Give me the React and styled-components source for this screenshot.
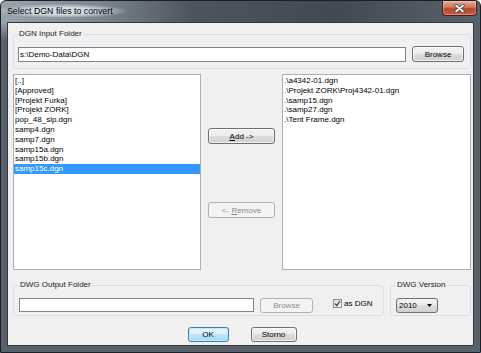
import React from "react";
import styled, { createGlobalStyle, css } from "styled-components";

const GlobalStyle = createGlobalStyle`
  html, body {
    margin: 0;
    padding: 0;
    background: #ffffff;
  }
  body {
    font-family: "Liberation Sans", Arial, sans-serif;
  }
  * {
    box-sizing: border-box;
  }
`;

const Window = styled.div`
  width: 481px;
  height: 353px;
  display: flex;
  flex-direction: column;
  padding: 0 6px 6px;
  border: 1px solid #1c2026;
  border-radius: 6px 6px 0 0;
  overflow: hidden;
  background:
    linear-gradient(to bottom, rgba(88, 97, 107, 0) 0, rgba(88, 97, 107, 0) 21px, #58616b 40px),
    linear-gradient(to right, #9aa4ae 0%, #7c8691 20%, #4c555f 40%, #414952 70%, #59626c 100%);
`;

const TitleBar = styled.div`
  flex: none;
  height: 21px;
  display: flex;
  align-items: flex-start;
`;

const TitleText = styled.div`
  margin: 3px 0 0 -10px;
  padding: 0 14px 0 10px;
  height: 14px;
  line-height: 14px;
  font-size: 8.8px;
  color: #000000;
  white-space: nowrap;
  background: radial-gradient(ellipse at center, rgba(222, 228, 234, 0.9) 35%, rgba(222, 228, 234, 0) 72%);
`;

const CloseButton = styled.div`
  margin-left: auto;
  margin-right: -3px;
  width: 35px;
  height: 15px;
  display: flex;
  align-items: center;
  justify-content: center;
  border: 1px solid #3d1f1a;
  border-top: none;
  border-radius: 0 0 4px 4px;
  background: linear-gradient(#e6ab98 0%, #d2745d 45%, #b9452c 55%, #cc5a3e 100%);
  box-shadow: inset 0 0 0 1px rgba(255, 255, 255, 0.3);
`;

const Client = styled.div`
  flex: 1;
  display: flex;
  flex-direction: column;
  padding: 6px 2px 0 5px;
  background: #f0f0f0;
  border: 1px solid #2f363e;
  font-size: 8px;
  color: #000000;
`;

const GroupBox = styled.fieldset`
  margin: 0;
  min-width: 0;
  width: ${(p) => (p.$w ? `${p.$w}px` : "auto")};
  padding: ${(p) => p.$pad};
  border: 1px solid #d5dfe5;
  border-radius: 3px;
`;

const Legend = styled.legend`
  padding: 0 1px;
  line-height: 10px;
  font-size: 8px;
  color: #1a1a1a;
`;

const Row = styled.div`
  display: flex;
  align-items: center;
  height: 16px;
  gap: ${(p) => p.$gap || 0}px;
`;

const TextBox = styled.input`
  flex: ${(p) => (p.$w ? "none" : 1)};
  width: ${(p) => (p.$w ? `${p.$w}px` : "auto")};
  min-width: 0;
  height: ${(p) => p.$h || 15}px;
  margin: 0;
  padding: 0 1px;
  border: 1px solid #7f848c;
  background: #ffffff;
  font-family: inherit;
  font-size: 8px;
  color: #000000;
  outline: none;
`;

const Button = styled.button`
  flex: none;
  width: ${(p) => p.$w}px;
  height: ${(p) => p.$h || 16}px;
  margin: 0;
  padding: 0;
  border: 1px solid #707070;
  border-radius: 3px;
  background: linear-gradient(#f2f2f2 0%, #ebebeb 50%, #dddddd 50%, #cfcfcf 100%);
  box-shadow: inset 0 0 0 1px rgba(255, 255, 255, 0.7);
  font-family: inherit;
  font-size: 8px;
  color: #000000;
  ${(p) =>
    p.disabled &&
    css`
      border-color: #adb2b5;
      background: #f4f4f4;
      color: #8a8a8a;
      box-shadow: none;
    `}
  ${(p) =>
    p.$default &&
    css`
      border-color: #3c7fb1;
      background: linear-gradient(#eaf6fd 0%, #d9f0fc 50%, #bee6fd 50%, #a7d9f5 100%);
      box-shadow: inset 0 0 0 1px #bfe9fd;
    `}
`;

const ListsRow = styled.div`
  flex: none;
  display: flex;
  height: 196px;
  margin-top: 5px;
`;

const ListBox = styled.div`
  flex: none;
  width: ${(p) => p.$w}px;
  height: 100%;
  padding-top: 1px;
  background: #ffffff;
  border: 1px solid #abadb3;
  overflow: hidden;
`;

const ListItem = styled.div`
  height: 9.8px;
  line-height: 9.8px;
  padding-left: 1px;
  white-space: nowrap;
  ${(p) =>
    p.$selected &&
    css`
      background: #3399ff;
      color: #ffffff;
    `}
`;

const MiddleColumn = styled.div`
  flex: 1;
  display: flex;
  flex-direction: column;
  align-items: center;
  padding-top: 54px;
  gap: 58px;
`;

const BottomRow = styled.div`
  flex: none;
  display: flex;
  gap: 6px;
  margin-top: 10px;
`;

const CheckLabel = styled.label`
  display: flex;
  align-items: center;
  gap: 2px;
  margin-left: 14px;
  margin-top: -3px;
  font-size: 8px;
`;

const CheckBox = styled.span`
  width: 9px;
  height: 9px;
  display: flex;
  align-items: center;
  justify-content: center;
  border: 1px solid #8e8f8f;
  background: linear-gradient(135deg, #dadada, #ffffff);
`;

const Combo = styled.div`
  width: 42px;
  height: 15px;
  display: flex;
  align-items: center;
  justify-content: space-between;
  padding: 0 5px 0 2px;
  border: 1px solid #707070;
  border-radius: 3px;
  background: linear-gradient(#f2f2f2 0%, #ebebeb 50%, #dddddd 50%, #cfcfcf 100%);
  font-size: 8px;
`;

const DialogButtons = styled.div`
  flex: none;
  display: flex;
  justify-content: center;
  gap: 22px;
  margin-top: 11px;
`;

const sourceFiles = [
  "[..]",
  "[Approved]",
  "[Projekt Furka]",
  "[Projekt ZORK]",
  "pop_48_slp.dgn",
  "samp4.dgn",
  "samp7.dgn",
  "samp15a.dgn",
  "samp15b.dgn",
  "samp15c.dgn",
];

const selectedFiles = [
  ".\\a4342-01.dgn",
  ".\\Projekt ZORK\\Proj4342-01.dgn",
  ".\\samp15.dgn",
  ".\\samp27.dgn",
  ".\\Tent Frame.dgn",
];

const App = () => {
  return (
    <>
      <GlobalStyle />
      <Window>
        <TitleBar>
          <TitleText>Select DGN files to convert</TitleText>
          <CloseButton>
            <svg width="11" height="9" viewBox="0 0 11 9">
              <path d="M2 1.5 L9 7.5 M9 1.5 L2 7.5" stroke="#3a3f47" strokeWidth="3.4" strokeLinecap="round" />
              <path d="M2 1.5 L9 7.5 M9 1.5 L2 7.5" stroke="#ffffff" strokeWidth="1.8" strokeLinecap="round" />
            </svg>
          </CloseButton>
        </TitleBar>
        <Client>
          <GroupBox $pad="7px 6px 6px 4px">
            <Legend>DGN Input Folder</Legend>
            <Row $gap={6}>
              <TextBox readOnly value="s:\Demo-Data\DGN" />
              <Button $w={52}>Browse</Button>
            </Row>
          </GroupBox>

          <ListsRow>
            <ListBox $w={188}>
              {sourceFiles.map((f, i) => (
                <ListItem key={f} $selected={i === sourceFiles.length - 1}>
                  {f}
                </ListItem>
              ))}
            </ListBox>
            <MiddleColumn>
              <Button $w={67}>
                <u>A</u>dd -&gt;
              </Button>
              <Button $w={67} disabled>
                &lt;- <u>R</u>emove
              </Button>
            </MiddleColumn>
            <ListBox $w={189}>
              {selectedFiles.map((f) => (
                <ListItem key={f}>{f}</ListItem>
              ))}
            </ListBox>
          </ListsRow>

          <BottomRow>
            <GroupBox $w={371} $pad="7px 4px 2px 5px">
              <Legend>DWG Output Folder</Legend>
              <Row $gap={6}>
                <TextBox $w={235} $h={14} readOnly value="" />
                <Button $w={53} $h={15} disabled>
                  Browse
                </Button>
                <CheckLabel>
                  <CheckBox>
                    <svg width="7" height="7" viewBox="0 0 7 7">
                      <path d="M1 3.6 L2.8 5.6 L6 1" fill="none" stroke="#2c3a5a" strokeWidth="1.3" />
                    </svg>
                  </CheckBox>
                  as DGN
                </CheckLabel>
              </Row>
            </GroupBox>
            <GroupBox $w={81} $pad="7px 4px 2px 5px">
              <Legend>DWG Version</Legend>
              <Row>
                <Combo>
                  <span>2010</span>
                  <svg width="5" height="3" viewBox="0 0 5 3">
                    <polygon points="0,0 5,0 2.5,3" fill="#000000" />
                  </svg>
                </Combo>
              </Row>
            </GroupBox>
          </BottomRow>

          <DialogButtons>
            <Button $w={41} $h={15} $default>
              OK
            </Button>
            <Button $w={46} $h={15}>
              Storno
            </Button>
          </DialogButtons>
        </Client>
      </Window>
    </>
  );
};

export default App;
